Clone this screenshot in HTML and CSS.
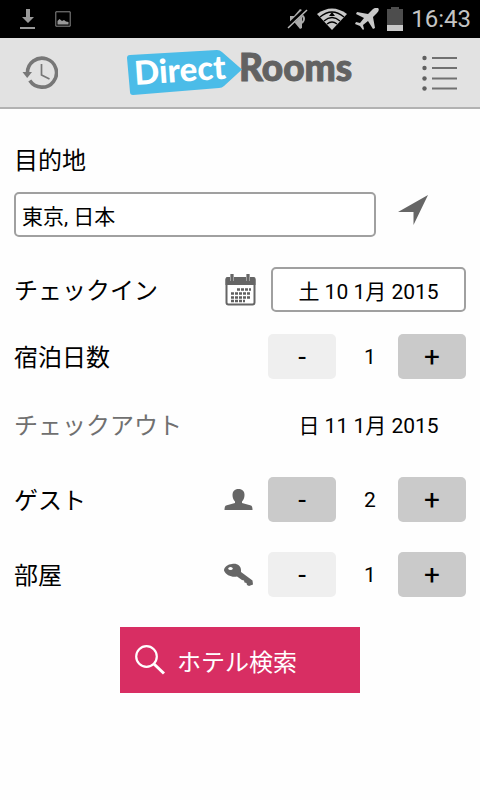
FILE: index.html
```html
<!DOCTYPE html>
<html lang="ja">
<head>
<meta charset="utf-8">
<meta name="viewport" content="width=device-width, initial-scale=1">
<title>DirectRooms</title>
<link rel="stylesheet" href="styles.css">
</head>
<body>
<div class="status">
  <div class="status-group">
    <svg width="16" height="22" viewBox="0 0 16 22" fill="#999"><path d="M6 1h4v8h4l-6 6-6-6h4zM0 19h15v2H0z"/></svg>
    <svg width="16" height="16" viewBox="0 0 16 16"><path d="M.8.8h14.4v14.4H.8z" fill="none" stroke="#8a8a8a"/><path d="M2.500 13.500V10l2-2 2.500 2 2-1 2 1.500 2.500.5v2.500z" fill="#999"/></svg>
  </div>
  <div class="status-group status-right">
    <svg width="22" height="24" viewBox="0 0 22 24"><path d="M3 9h4l6-7 2 1v18l-2 1-5-6H3z" fill="#aaa"/><path d="M15 8q4 4 0 8" fill="none" stroke="#aaa" stroke-width="2"/><path d="M0 20 19 2" stroke="#000" stroke-width="4"/><path d="M1 21 20 3" stroke="#b8b8b8" stroke-width="1.500"/></svg>
    <svg width="30" height="22" viewBox="0 0 30 22"><path d="M15 22 0 6Q15-5 30 6z" fill="#c8c8c8"/><path d="M3 9Q15-1 27 9M7 13q8-7 16 0M10 16q5-4 10 0" fill="none" stroke="#000" stroke-width="1.300"/><path d="m12 8 3-4 3 4z" fill="#000"/></svg>
    <svg width="24" height="22" viewBox="0 0 24 22"><path d="M23 0q2 2-1 5l-4 4 2 11-2 1-5-8-5 4 1 4-1 1-3-4-5-2 1-2 4 1 4-5-8-4 1-2 11 2 5-5q3-2 5-1z" fill="#c8c8c8"/></svg>
    <svg width="16" height="24" viewBox="0 0 16 24"><path d="M4 0h8v2h4v22H0V2h4z" fill="#4d4d4d"/><path d="M0 18h16v6H0z" fill="#c8c8c8"/></svg>
    <span class="clock">16:43</span>
  </div>
</div>

<header class="header">
  <button class="icon-button" type="button" aria-label="履歴">
    <svg width="36" height="34" viewBox="0 0 36 34" fill="none" stroke="#777"><path d="M5.500 17A14.500 14.500 0 1 1 7.800 24.500" stroke-width="3.600"/><path d="M.5 16h9.500l-4.800 6z" fill="#777" stroke="none"/><path d="M19.500 8v11l8 4" stroke-width="1.700"/></svg>
  </button>
  <svg class="logo" width="240" height="56" viewBox="-5 -3 240 56" role="img" aria-label="DirectRooms">
    <text class="logo-text" x="114" y="33" font-size="37" fill="#626262" stroke="#626262" stroke-width="1">Rooms</text>
    <path d="m94 3 21 18.500L99 41" fill="none" stroke="#e2e2e2" stroke-width="2"/>
    <path d="M5 7 92 2q3 0 5 2l20 17.500L99 38q-2 2-5 2L8 47q-3 0-3-3L2 10q0-3 3-3z" fill="#4bbce8"/>
    <text class="logo-text" x="10" y="37" font-size="33" fill="#fff" transform="rotate(-4 10 37)">Direct</text>
  </svg>
  <button class="icon-button" type="button" aria-label="メニュー">
    <svg width="36" height="36" viewBox="0 0 36 36"><path d="M10 3h25M10 13h25M10 23.500h25M10 33.500h25" stroke="#707070" stroke-width="2"/><g fill="#606060"><circle cx="2.500" cy="3" r="2.200"/><circle cx="2.500" cy="13" r="2.200"/><circle cx="2.500" cy="23.500" r="2.200"/><circle cx="2.500" cy="33.500" r="2.200"/></g></svg>
  </button>
</header>

<form class="form">
  <label class="label" for="destination">目的地</label>
  <div class="destination">
    <input class="box" id="destination" type="text" value="東京, 日本">
    <button class="locate" type="button" aria-label="現在地">
      <svg width="30" height="30" viewBox="0 0 30 30"><path d="M30 0 15.500 30V17H0z" fill="#666"/></svg>
    </button>
  </div>

  <div class="row">
    <label class="label" for="checkin">チェックイン</label>
    <svg class="row-icon" width="32" height="34" viewBox="0 0 32 34"><rect x="2.500" y="5" width="28" height="26.500" rx="2" fill="#fff" stroke="#656565" stroke-width="2"/><path d="M1.500 6q0-2 2-2h26q2 0 2 2v6h-30z" fill="#656565"/><path d="M8 1v7M24 1v7" stroke="#ddd" stroke-width="4"/><path d="M8 1v7M24 1v7" stroke="#656565" stroke-width="3"/><path d="M13 16.500h14M7 20.500h20M7 24.500h20M7 28h14" stroke="#606060" stroke-width="2.600" stroke-dasharray="3 1"/></svg>
    <button class="box date" id="checkin" type="button">土 10 1月 2015</button>
  </div>

  <div class="row">
    <span class="label">宿泊日数</span>
    <div class="stepper" role="group" aria-label="宿泊日数">
      <button class="step" type="button" disabled>-</button>
      <output class="count">1</output>
      <button class="step" type="button">+</button>
    </div>
  </div>

  <div class="row checkout">
    <span class="label">チェックアウト</span>
    <output class="date">日 11 1月 2015</output>
  </div>

  <div class="row">
    <span class="label">ゲスト</span>
    <svg class="row-icon" width="32" height="22" viewBox="0 0 32 22"><path d="M14.500 0c4 0 6 2.500 6 6 0 3-1 5-2.500 6.500V14l9 2.500q1.500.5 1.500 4.500H.5q0-4 1.500-4.500L11 14v-1.500C9.500 11 8.500 9 8.500 6c0-3.500 2-6 6-6z" fill="#666"/></svg>
    <div class="stepper" role="group" aria-label="ゲスト">
      <button class="step" type="button">-</button>
      <output class="count">2</output>
      <button class="step" type="button">+</button>
    </div>
  </div>

  <div class="row">
    <span class="label">部屋</span>
    <svg class="row-icon" width="32" height="24" viewBox="0 0 32 24"><path d="M8 1c5-1 9 2 9 6v2l11.500 8.500.5 4-4 1.500-2-1-.500-2-2-.500-.500-2-2-.500L13 13.500c-5 1-11-1-13-6C0 4 4 1 8 1z" fill="#666"/><ellipse cx="6.500" cy="5.500" rx="2.200" ry="1.600" fill="#fff"/></svg>
    <div class="stepper" role="group" aria-label="部屋">
      <button class="step" type="button" disabled>-</button>
      <output class="count">1</output>
      <button class="step" type="button">+</button>
    </div>
  </div>

  <button class="search" type="submit">
    <svg width="30" height="30" viewBox="0 0 30 30" fill="none" stroke="#fff"><circle cx="11.500" cy="11.500" r="10.300" stroke-width="2.200"/><path d="m19 19 10 9.500" stroke-width="3"/></svg>
    ホテル検索
  </button>
</form>
</body>
</html>
```
FILE: styles.css
```css
* {
  box-sizing: border-box;
}

body {
  margin: 0;
  background: #fefefe;
  color: #000;
  font-family: Roboto, "Noto Sans CJK JP", sans-serif;
  font-size: 21px;
}

button,
input {
  margin: 0;
  padding: 0;
  border: 0;
  background: none;
  color: inherit;
  font: inherit;
}

svg {
  display: block;
  flex: none;
}

.status {
  display: flex;
  align-items: center;
  justify-content: space-between;
  height: 38px;
  padding: 0 9px 0 20px;
  background: #000;
}

.status-group {
  display: flex;
  align-items: center;
  gap: 19px;
}

.status-right {
  gap: 8px;
}

.clock {
  color: #c4c4c4;
  font-size: 24px;
  line-height: 38px;
}

.header {
  display: flex;
  align-items: center;
  justify-content: space-between;
  height: 71px;
  padding: 0 22px;
  border-bottom: 2px solid #b2b2b2;
  background: #e2e2e2;
}

.logo-text {
  font-family: Lato, sans-serif;
  font-weight: 900;
}

.form {
  display: flex;
  flex-direction: column;
  padding: 34px 14px;
}

.label {
  flex: 1;
  padding-top: 3px;
  font-size: 24px;
  line-height: 30px;
}

.destination {
  display: flex;
  align-items: flex-start;
  gap: 22px;
  margin-top: 16px;
  padding-right: 38px;
}

.box {
  height: 45px;
  border: 2px solid #a0a0a0;
  border-radius: 5px;
  background: #fff;
}

.destination .box {
  flex: 1;
  min-width: 0;
  padding: 0 6px;
}

.locate {
  display: flex;
  align-items: center;
  height: 36px;
}

.row {
  display: flex;
  align-items: center;
  gap: 12px;
  min-height: 45px;
  margin-top: 30px;
}

.row:has(#checkin) {
  gap: 15px;
}

.row:has(#checkin) + .row,
.checkout {
  margin-top: 22px;
}

.checkout {
  min-height: 46px;
}

.checkout .label {
  color: #707070;
}

.date {
  width: 195px;
  text-align: center;
}

.stepper {
  display: flex;
  align-items: center;
}

.step {
  width: 68px;
  height: 45px;
  border-radius: 5px;
  background: #cacaca;
  font-size: 28px;
}

.step:disabled {
  background: #efefef;
}

.count {
  width: 62px;
  padding-left: 6px;
  text-align: center;
}

.search {
  display: flex;
  align-items: center;
  align-self: center;
  gap: 12px;
  width: 240px;
  height: 66px;
  margin-top: 30px;
  padding: 0 15px;
  background: #d82e63;
  color: #fff;
  font-size: 24px;
}
```
